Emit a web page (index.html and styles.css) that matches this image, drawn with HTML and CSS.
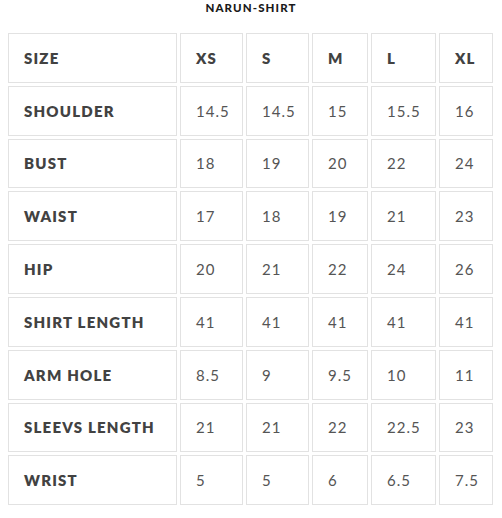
FILE: index.html
```html
<!DOCTYPE html>
<html>
<head>
<meta charset="utf-8">
<link rel="stylesheet" href="styles.css">
</head>
<body>
<div class="page">
  <h2 class="title">NARUN-SHIRT</h2>
  <table class="size-table">
    <colgroup>
      <col class="c1"><col class="c2"><col class="c3"><col class="c4"><col class="c5"><col class="c6">
    </colgroup>
    <tr><th>SIZE</th><th>XS</th><th>S</th><th>M</th><th>L</th><th>XL</th></tr>
    <tr><th>SHOULDER</th><td>14.5</td><td>14.5</td><td>15</td><td>15.5</td><td>16</td></tr>
    <tr><th>BUST</th><td>18</td><td>19</td><td>20</td><td>22</td><td>24</td></tr>
    <tr><th>WAIST</th><td>17</td><td>18</td><td>19</td><td>21</td><td>23</td></tr>
    <tr><th>HIP</th><td>20</td><td>21</td><td>22</td><td>24</td><td>26</td></tr>
    <tr><th>SHIRT LENGTH</th><td>41</td><td>41</td><td>41</td><td>41</td><td>41</td></tr>
    <tr><th>ARM HOLE</th><td>8.5</td><td>9</td><td>9.5</td><td>10</td><td>11</td></tr>
    <tr><th>SLEEVS LENGTH</th><td>21</td><td>21</td><td>22</td><td>22.5</td><td>23</td></tr>
    <tr><th>WRIST</th><td>5</td><td>5</td><td>6</td><td>6.5</td><td>7.5</td></tr>
  </table>
</div>
</body>
</html>
```

FILE: styles.css
```css
html, body {
  margin: 0;
  padding: 0;
  background: #ffffff;
}
.page {
  font-family: Lato, "Liberation Sans", sans-serif;
}
.title {
  margin: 0;
  text-align: center;
  font-size: 11.5px;
  line-height: 15px;
  font-weight: 900;
  letter-spacing: 1.1px;
  color: #1a1a1a;
}
.size-table {
  margin: 15px 0 0 5px;
  width: 491px;
  table-layout: fixed;
  border-collapse: separate;
  border-spacing: 3px 3px;
}
.c1 { width: 169px; }
.c2 { width: 63px; }
.c3 { width: 63px; }
.c4 { width: 56px; }
.c5 { width: 65px; }
.c6 { width: 54px; }
.size-table th,
.size-table td {
  box-sizing: border-box;
  height: 49.8px;
  padding: 0 14px 0 15px;
  border: 1px solid #e2e2e2;
  text-align: left;
  vertical-align: middle;
  font-size: 15px;
  white-space: nowrap;
}
.size-table th {
  font-weight: 800;
  color: #424242;
  letter-spacing: 1.2px;
}
.size-table td {
  font-weight: 400;
  color: #555555;
  letter-spacing: 1px;
}
```
